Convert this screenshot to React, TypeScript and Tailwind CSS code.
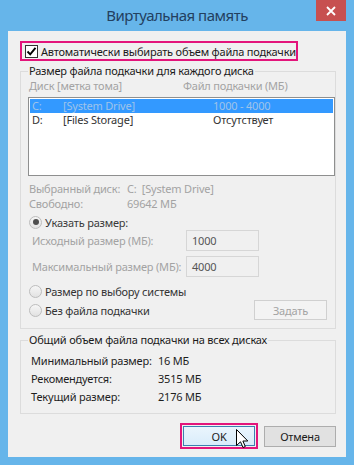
import React from "react";

function Radio({ checked }: { checked?: boolean }) {
  return (
    <div className="w-[13px] h-[13px] rounded-full border border-[#bdbdbd] bg-gradient-to-b from-[#f6f6f6] to-[#e2e2e2] flex items-center justify-center shrink-0">
      {checked && <div className="w-[6px] h-[6px] rounded-full bg-[#4d4d4d]" />}
    </div>
  );
}

export default function App() {
  return (
    <div className="w-[354px] h-[465px] bg-[#66b5ea] flex flex-col font-['Noto_Sans',sans-serif] text-[11px] tracking-[-0.2px] leading-[15px] text-[#1e1e1e] select-none">
      {/* title bar */}
      <div className="h-[31px] grid grid-cols-[38px_1fr_38px] items-start">
        <div />
        <div className="text-center text-[15px] tracking-[-0.5px] leading-[31px] text-[#23405f] whitespace-nowrap">Виртуальная память</div>
        <div className="h-[21px] w-[30px] bg-[#c75050] flex items-center justify-center">
          <svg width="10" height="10" viewBox="0 0 10 10">
            <path d="M1 1 L9 9 M9 1 L1 9" stroke="#ffffff" strokeWidth="1.8" />
          </svg>
        </div>
      </div>

      {/* client */}
      <div className="mx-[8px] mb-[8px] flex-1 bg-[#f0f0f0] flex flex-col pt-[10px]">
        {/* auto checkbox */}
        <div className="ml-[12px] w-[278px] h-[20px] border-2 border-[#e3157b] flex items-center pl-[3px]">
          <div className="w-[13px] h-[13px] border border-[#333333] bg-white flex items-center justify-center shrink-0">
            <svg width="11" height="11" viewBox="0 0 11 11">
              <path d="M1.5 5.5 L4.2 8.3 L9.5 1.8" stroke="#000000" strokeWidth="1.9" fill="none" />
            </svg>
          </div>
          <span className="ml-[3px] whitespace-nowrap text-[#1a1a1a]">Автоматически выбирать объем файла подкачки</span>
        </div>

        {/* group 1 */}
        <fieldset className="mt-[2px] ml-[12px] w-[316px] border border-[#dcdcdc] pl-[7px] pb-[8px]">
          <legend className="px-[1px] leading-[16px] text-[#1a1a1a] whitespace-nowrap">Размер файла подкачки для каждого диска</legend>
          <div className="h-[14px] leading-[14px] flex text-[#a3a3a3] whitespace-nowrap">
            <div className="w-[155px] pl-[1px]">Диск [метка тома]</div>
            <div>Файл подкачки (МБ)</div>
          </div>
          <div className="mt-[4px] h-[79px] border border-[#8e8f8f] bg-white p-[1px] flex flex-col">
            <div className="h-[14px] leading-[14px] bg-[#3399ff] flex text-[#9fc3ea] whitespace-nowrap pl-[2px]">
              <div className="w-[31px]">C:</div>
              <div className="w-[150px]">[System Drive]</div>
              <div>1000 - 4000</div>
            </div>
            <div className="h-[14px] leading-[14px] flex text-[#333333] whitespace-nowrap pl-[2px]">
              <div className="w-[31px]">D:</div>
              <div className="w-[150px]">[Files Storage]</div>
              <div>Отсутствует</div>
            </div>
          </div>
          <div className="mt-[5px] h-[15px] flex text-[#a3a3a3] whitespace-nowrap">
            <div className="w-[99px] pl-[1px]">Выбранный диск:</div>
            <div>C:&nbsp;&nbsp;[System Drive]</div>
          </div>
          <div className="h-[15px] flex text-[#a3a3a3] whitespace-nowrap">
            <div className="w-[99px] pl-[1px]">Свободно:</div>
            <div>69642 МБ</div>
          </div>
          <div className="mt-[3px] h-[16px] flex items-center pl-[1px] whitespace-nowrap">
            <Radio checked />
            <span className="ml-[3px] text-[#3a3a3a]">Указать размер:</span>
          </div>
          <div className="h-[21px] flex items-center whitespace-nowrap">
            <div className="w-[158px] pl-[4px] text-[#a3a3a3]">Исходный размер (МБ):</div>
            <div className="w-[73px] h-[21px] border border-[#d6d6d6] bg-[#f0f0f0] pl-[5px] flex items-center text-[#555555]">1000</div>
          </div>
          <div className="mt-[5px] h-[21px] flex items-center whitespace-nowrap">
            <div className="w-[158px] pl-[4px] text-[#a3a3a3]">Максимальный размер (МБ):</div>
            <div className="w-[73px] h-[21px] border border-[#d6d6d6] bg-[#f0f0f0] pl-[5px] flex items-center text-[#555555]">4000</div>
          </div>
          <div className="mt-[6px] h-[16px] flex items-center pl-[1px] whitespace-nowrap">
            <Radio />
            <span className="ml-[3px] text-[#333333]">Размер по выбору системы</span>
          </div>
          <div className="mt-[1px] h-[20px] flex items-center pl-[1px] whitespace-nowrap">
            <Radio />
            <span className="ml-[3px] text-[#333333]">Без файла подкачки</span>
            <div className="ml-auto mr-[8px] w-[73px] h-[20px] border border-[#d0d0d0] bg-[#f3f3f3] flex items-center justify-center text-[#a3a3a3]">Задать</div>
          </div>
        </fieldset>

        {/* group 2 */}
        <fieldset className="mt-[3px] ml-[12px] w-[316px] border border-[#dcdcdc] pl-[7px] pt-[4px] pb-[8px]">
          <legend className="px-[1px] leading-[16px] text-[#1a1a1a] whitespace-nowrap">Общий объем файла подкачки на всех дисках</legend>
          <div className="h-[17px] flex items-center whitespace-nowrap text-[#1e1e1e]">
            <div className="w-[130px] pl-[3px]">Минимальный размер:</div>
            <div>16 МБ</div>
          </div>
          <div className="h-[18px] flex items-center whitespace-nowrap text-[#1e1e1e]">
            <div className="w-[130px] pl-[3px]">Рекомендуется:</div>
            <div>3515 МБ</div>
          </div>
          <div className="h-[18px] flex items-center whitespace-nowrap text-[#1e1e1e]">
            <div className="w-[130px] pl-[3px]">Текущий размер:</div>
            <div>2176 МБ</div>
          </div>
        </fieldset>

        {/* buttons */}
        <div className="mt-[9px] flex justify-end items-start pr-[10px] gap-[6px]">
          <div className="relative w-[78px] h-[26px] border-2 border-[#e3157b] p-[1px]">
            <div className="w-full h-[20px] border border-[#3c7fb1] bg-gradient-to-b from-[#eaf5fd] to-[#d9ecfb] flex items-center justify-center text-[#1a1a1a]">OK</div>
            <svg className="absolute left-[54px] top-[4px]" width="13" height="20" viewBox="0 0 13 20">
              <path d="M0.5 0.5 L0.5 16.5 L4.5 12.8 L7 18.5 L9.3 17.5 L6.9 12 L11.8 12 Z" fill="#ffffff" stroke="#000000" strokeWidth="1" strokeLinejoin="miter" />
            </svg>
          </div>
          <div className="mt-[3px] w-[72px] h-[21px] border border-[#adadad] bg-[#e1e1e1] flex items-center justify-center text-[#1a1a1a]">Отмена</div>
        </div>
      </div>
    </div>
  );
}
